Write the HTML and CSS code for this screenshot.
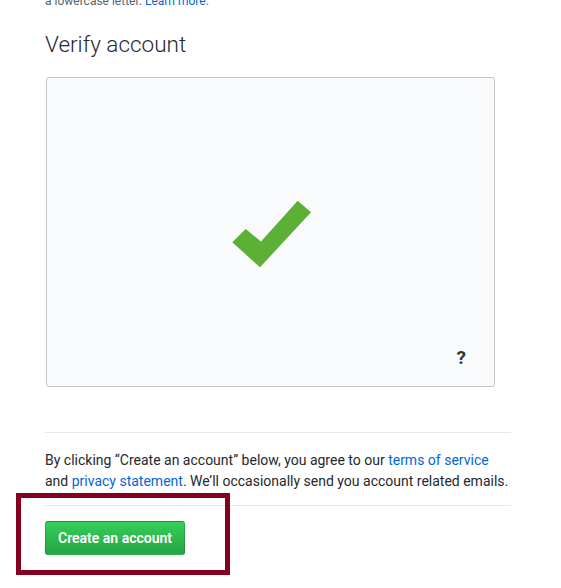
FILE: index.html
```html
<!DOCTYPE html>
<html>
<head>
<meta charset="utf-8">
<link rel="stylesheet" href="styles.css">
</head>
<body>
<div class="page">
  <p class="note">a lowercase letter. <a href="#">Learn more.</a></p>
  <h2 class="title">Verify account</h2>
  <div class="captcha">
    <svg class="check" width="80" height="68" viewBox="0 0 80 68">
      <polygon points="0.3,42.3 13.7,29 29,41.5 65.7,0.7 79,12.3 28,67.3" fill="#5bb035"/>
    </svg>
    <span class="help">?</span>
  </div>
  <hr class="rule rule-top">
  <p class="terms">By clicking “Create an account” below, you agree to our <a href="#">terms of service</a> and <a href="#">privacy statement</a>. We’ll occasionally send you account related emails.</p>
  <hr class="rule">
  <div class="actions">
    <button class="btn-primary">Create an account</button>
    <div class="highlight"></div>
  </div>
</div>
</body>
</html>
```
FILE: styles.css
```css
html, body {
  margin: 0;
  padding: 0;
  background: #fff;
}
body {
  font-family: "Segoe UI", Roboto, "Noto Sans", sans-serif;
  color: #24292e;
}
a {
  color: #0366d6;
  text-decoration: none;
}
.page {
  width: 466px;
  padding: 0 0 20px 45px;
}
.note {
  margin: 0;
  height: 2px;
  font-size: 12px;
  line-height: 2px;
  color: #586069;
}
.title {
  margin: 27px 0 0;
  font-size: 22.5px;
  font-weight: 300;
  line-height: 30px;
  color: #24292e;
}
.captcha {
  position: relative;
  margin: 18px 0 0 1px;
  width: 447px;
  height: 308px;
  border: 1px solid #c6c6c6;
  border-radius: 3px;
  background: #f9fafb;
  display: flex;
  align-items: center;
  justify-content: center;
}
.check {
  display: block;
  margin-top: 4px;
  margin-left: 2px;
}
.help {
  position: absolute;
  right: 28px;
  bottom: 16px;
  font-size: 19px;
  font-weight: 700;
  color: #333;
  line-height: 24px;
}
.rule {
  margin: 0;
  border: 0;
  border-top: 1px solid #e8e8e8;
  height: 0;
}
.rule-top {
  margin-top: 45px;
}
.terms {
  margin: 17px 0 0;
  font-size: 14px;
  line-height: 21px;
  padding-bottom: 13px;
}
.actions {
  position: relative;
  padding-top: 15px;
}
.btn-primary {
  display: block;
  width: 140px;
  height: 34px;
  padding: 0;
  font-family: inherit;
  font-size: 14px;
  font-weight: 600;
  color: #fff;
  background: linear-gradient(#34d058, #28a745 90%);
  border: 1px solid rgba(27, 31, 35, 0.2);
  border-radius: 3px;
}
.highlight {
  position: absolute;
  left: -29px;
  top: -13px;
  width: 204px;
  height: 72px;
  border: 5px solid #85001e;
}
```
